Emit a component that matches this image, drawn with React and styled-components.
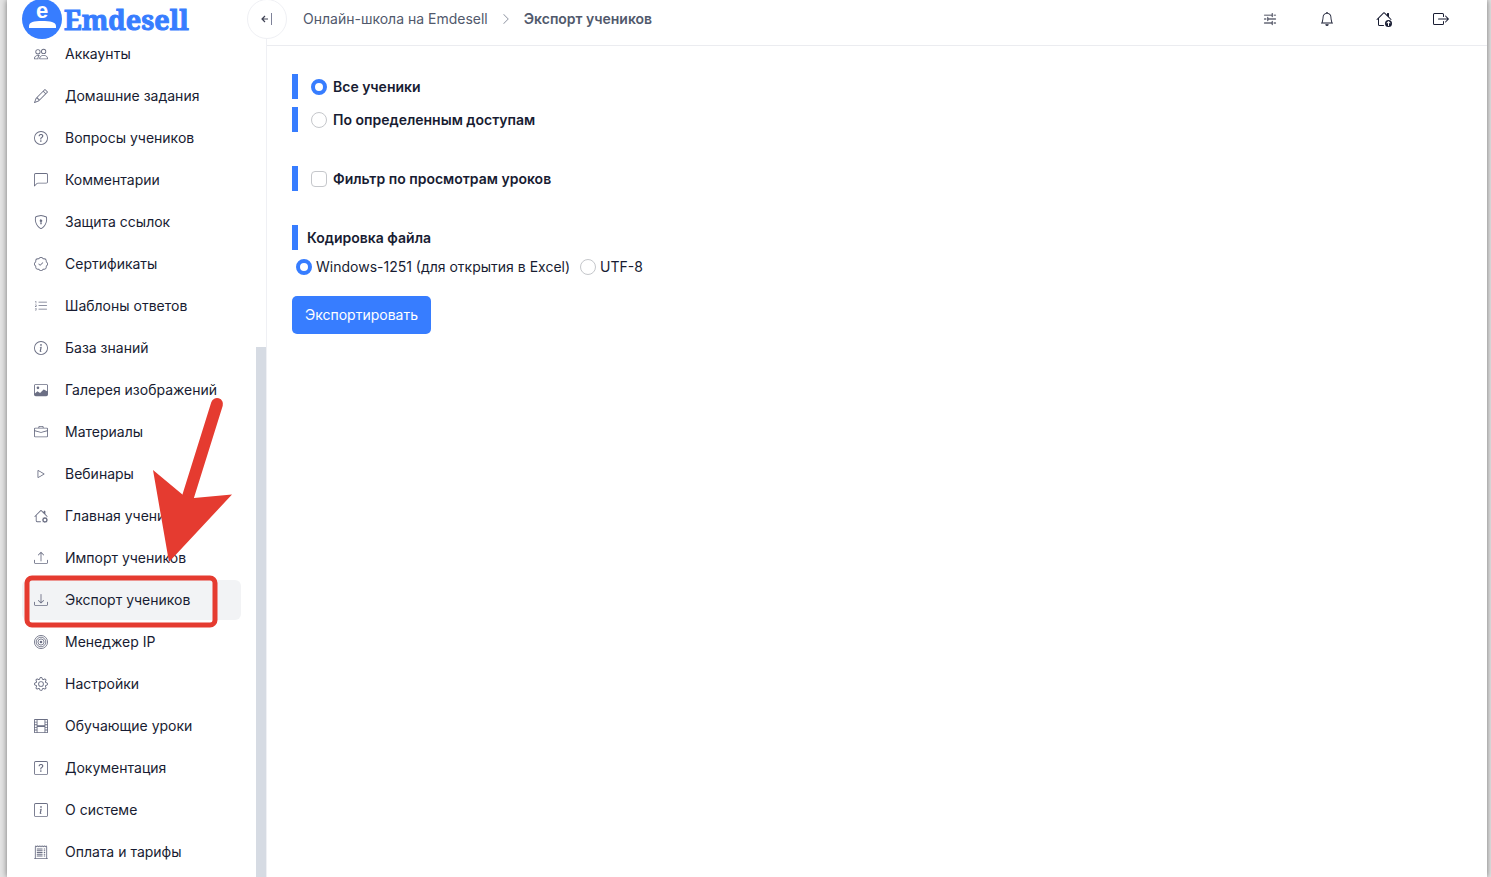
import styled, { createGlobalStyle, css } from "styled-components";
import { useState } from "react";
import {
    BsPeople, BsPencil, BsQuestionCircle, BsChatLeft, BsShieldLock, BsPatchCheck, BsListOl,
    BsInfoCircle, BsImage, BsBriefcase, BsPlay, BsHouseGear, BsUpload, BsDownload,
    BsGear, BsFilm, BsQuestionSquare, BsInfoSquare, BsReceiptCutoff, BsSliders2, BsBell, BsHouseUp,
    BsBoxArrowRight, BsChevronRight,
} from "react-icons/bs";

const GlobalStyle = createGlobalStyle`
    * {
        box-sizing: border-box;
    }

    body {
        margin: 0;
        background: #e4e4e4;
        color: #181c32;
        font-family: Inter, "Liberation Sans", sans-serif;
        font-size: 14px;
        line-height: 20px;
    }

    button, input {
        font: inherit;
    }
`;

const BullseyeIcon = () => (
    <svg width="14" height="14" viewBox="0 0 16 16" fill="none" stroke="currentColor" aria-hidden="true">
        <circle cx="8" cy="8" r="7.5" />
        <circle cx="8" cy="8" r="5.5" />
        <circle cx="8" cy="8" r="3.5" />
        <circle cx="8" cy="8" r="1.5" fill="currentColor" stroke="none" />
    </svg>
);

const menuItems = [
    { label: "Аккаунты", icon: BsPeople },
    { label: "Домашние задания", icon: BsPencil },
    { label: "Вопросы учеников", icon: BsQuestionCircle },
    { label: "Комментарии", icon: BsChatLeft },
    { label: "Защита ссылок", icon: BsShieldLock },
    { label: "Сертификаты", icon: BsPatchCheck },
    { label: "Шаблоны ответов", icon: BsListOl },
    { label: "База знаний", icon: BsInfoCircle },
    { label: "Галерея изображений", icon: BsImage },
    { label: "Материалы", icon: BsBriefcase },
    { label: "Вебинары", icon: BsPlay },
    { label: "Главная учеников", icon: BsHouseGear },
    { label: "Импорт учеников", icon: BsUpload },
    { label: "Экспорт учеников", icon: BsDownload, active: true },
    { label: "Менеджер IP", icon: BullseyeIcon },
    { label: "Настройки", icon: BsGear },
    { label: "Обучающие уроки", icon: BsFilm },
    { label: "Документация", icon: BsQuestionSquare },
    { label: "О системе", icon: BsInfoSquare },
    { label: "Оплата и тарифы", icon: BsReceiptCutoff },
];

const headerActions = [
    { label: "Параметры", icon: BsSliders2, size: 14 },
    { label: "Уведомления", icon: BsBell, size: 14 },
    { label: "Главная", icon: BsHouseUp, size: 16 },
    { label: "Выход", icon: BsBoxArrowRight, size: 16 },
];

const Page = styled.div`
    display: flex;
    height: 100vh;
    margin: 0 4px 0 7px;
    overflow: hidden;
    background: #fff;
    box-shadow: 0 0 6px rgba(0, 0, 0, 0.5);
`;

const Sidebar = styled.aside`
    position: relative;
    display: flex;
    flex-direction: column;
    flex: 0 0 260px;
    border-right: 1px solid #eff0f4;
`;

const Logo = styled.a`
    display: flex;
    align-items: center;
    flex: none;
    gap: 2px;
    height: 39px;
    padding-left: 15px;
    color: #377dff;
    font-family: "Noto Serif", "DejaVu Serif", serif;
    font-size: 27px;
    font-weight: 700;
    text-decoration: none;
    -webkit-text-stroke: 1px #377dff;
`;

const LogoMark = styled.span`
    position: relative;
    display: flex;
    flex: none;
`;

const LogoLetter = styled.span`
    position: absolute;
    top: 0;
    left: 0;
    width: 100%;
    color: #fff;
    font-family: "Liberation Sans", sans-serif;
    font-size: 22px;
    line-height: 22px;
    text-align: center;
    -webkit-text-stroke: 0;
`;

const CollapseButton = styled.button`
    position: absolute;
    top: -1px;
    right: -21px;
    z-index: 1;
    display: grid;
    place-items: center;
    width: 40px;
    height: 40px;
    padding: 0;
    border: 1px solid #eff0f4;
    border-radius: 50%;
    background: #fff;
    color: #3f4254;
`;

const MenuScroll = styled.div`
    position: relative;
    display: flex;
    flex: 1;
    min-height: 0;
`;

const Menu = styled.nav`
    flex: 1;
    display: flex;
    flex-direction: column;
    justify-content: flex-end;
    gap: 2px;
    padding: 0 15px 5px;
`;

const MenuItem = styled.a`
    display: flex;
    align-items: center;
    flex: none;
    gap: 17px;
    height: 40px;
    padding: 0 12px;
    border-radius: 6px;
    background: ${({ $active }) => ($active ? "#f2f3f5" : "transparent")};
    color: #181c32;
    text-decoration: none;
    white-space: nowrap;

    svg {
        flex: none;
        color: #6b6f84;
    }
`;

const ScrollTrack = styled.div`
    display: flex;
    flex: 0 0 10px;
    align-items: flex-end;
`;

const ScrollThumb = styled.div`
    width: 10px;
    height: calc(63% + 2px);
    background: #d6dbe3;
`;

const Main = styled.div`
    flex: 1;
    min-width: 0;
`;

const Header = styled.header`
    display: flex;
    justify-content: space-between;
    height: 46px;
    padding: 0 38px 7px 36px;
    border-bottom: 1px solid #ebecf0;
`;

const Breadcrumbs = styled.nav`
    display: flex;
    align-items: center;
    gap: 12px;
    color: #51596c;

    a {
        color: inherit;
        text-decoration: none;
    }

    svg {
        color: #8c92a0;
    }

    strong {
        font-weight: 600;
    }
`;

const Actions = styled.div`
    display: flex;
    align-items: center;
    gap: 41px;
`;

const ActionButton = styled.button`
    display: grid;
    place-items: center;
    width: 16px;
    height: 24px;
    padding: 0;
    border: 0;
    background: none;
    color: #181c32;
`;

const ExportForm = styled.form`
    display: flex;
    flex-direction: column;
    align-items: flex-start;
    padding: 28px 25px;
`;

const Group = styled.div`
    display: flex;
    flex-direction: column;
    gap: 8px;
    margin-bottom: 34px;
`;

const marked = css`
    display: flex;
    align-items: center;
    height: 25px;
    border-left: 6px solid #377dff;
    font-weight: 600;
`;

const MarkedLabel = styled.label`
    ${marked}
    gap: 6px;
    padding-left: 13px;
`;

const MarkedTitle = styled.h2`
    ${marked}
    margin: 0;
    padding-left: 9px;
    font-size: 14px;
`;

const Check = styled.input`
    appearance: none;
    flex: none;
    width: 16px;
    height: 16px;
    margin: 0;
    border: 1px solid #c5c7cb;
    border-radius: ${({ type }) => (type === "radio" ? "50%" : "4px")};
    background: #fff;

    &:checked {
        border: ${({ type }) => (type === "radio" ? "4px" : "8px")} solid #377dff;
    }
`;

const Encodings = styled.div`
    display: flex;
    gap: 10px;
    margin: 7px 0 19px 4px;
`;

const EncodingLabel = styled.label`
    display: flex;
    align-items: center;
    gap: 4px;
`;

const ExportButton = styled.button`
    height: 38px;
    padding: 0 13px;
    border: 0;
    border-radius: 5px;
    background: #377dff;
    color: #fff;
`;

const Annotation = styled.svg`
    position: absolute;
    top: 357px;
    left: 17px;
    pointer-events: none;
`;

const App = () => {
    const [scope, setScope] = useState("all");
    const [byViews, setByViews] = useState(false);
    const [encoding, setEncoding] = useState("windows-1251");

    return (
        <>
            <GlobalStyle />
            <Page>
                <Sidebar>
                    <Logo href="#">
                        <LogoMark>
                            <svg width="40" height="39" viewBox="0 0 40 39" aria-hidden="true">
                                <circle cx="20" cy="19" r="20" fill="#377dff" />
                                <path d="M7 28v-2c0-4 5-5 13-5s14 1 14 5v2z" fill="#fff" />
                            </svg>
                            <LogoLetter>e</LogoLetter>
                        </LogoMark>
                        Emdesell
                    </Logo>
                    <CollapseButton type="button" aria-label="Свернуть меню">
                        <svg width="12" height="14" viewBox="0 0 12 14" fill="none" stroke="currentColor" aria-hidden="true">
                            <path d="M7 7H1.500M4 4L1 7l3 3" strokeWidth="1.200" />
                            <path d="M10.500 1v12" stroke="#7e8299" />
                        </svg>
                    </CollapseButton>
                    <MenuScroll>
                        <Menu>
                            {menuItems.map(({ label, icon: Icon, active }) => (
                                <MenuItem key={label} href="#" $active={active}>
                                    <Icon size={14} />
                                    {label}
                                </MenuItem>
                            ))}
                        </Menu>
                        <ScrollTrack>
                            <ScrollThumb />
                        </ScrollTrack>
                        <Annotation width="212" height="236" viewBox="24 396 212 236" aria-hidden="true">
                            <rect x="27" y="578" width="188" height="47" rx="5" fill="none" stroke="#e53b30" strokeWidth="5" />
                            <path d="M217 404L187 500" stroke="#e53b30" strokeWidth="12" strokeLinecap="round" />
                            <path d="M153 470L183 495 194 498 232 494.500 169 562z" fill="#e53b30" />
                        </Annotation>
                    </MenuScroll>
                </Sidebar>
                <Main>
                    <Header>
                        <Breadcrumbs>
                            <a href="#">Онлайн-школа на Emdesell</a>
                            <BsChevronRight size={12} />
                            <strong>Экспорт учеников</strong>
                        </Breadcrumbs>
                        <Actions>
                            {headerActions.map(({ label, icon: Icon, size }) => (
                                <ActionButton key={label} type="button" aria-label={label}>
                                    <Icon size={size} />
                                </ActionButton>
                            ))}
                        </Actions>
                    </Header>
                    <ExportForm onSubmit={(event) => event.preventDefault()}>
                        <Group>
                            <MarkedLabel>
                                <Check type="radio" name="scope" checked={scope === "all"} onChange={() => setScope("all")} />
                                Все ученики
                            </MarkedLabel>
                            <MarkedLabel>
                                <Check type="radio" name="scope" checked={scope === "access"} onChange={() => setScope("access")} />
                                По определенным доступам
                            </MarkedLabel>
                        </Group>
                        <Group>
                            <MarkedLabel>
                                <Check type="checkbox" checked={byViews} onChange={() => setByViews(!byViews)} />
                                Фильтр по просмотрам уроков
                            </MarkedLabel>
                        </Group>
                        <MarkedTitle>Кодировка файла</MarkedTitle>
                        <Encodings>
                            <EncodingLabel>
                                <Check
                                    type="radio"
                                    name="encoding"
                                    checked={encoding === "windows-1251"}
                                    onChange={() => setEncoding("windows-1251")}
                                />
                                Windows-1251 (для открытия в Excel)
                            </EncodingLabel>
                            <EncodingLabel>
                                <Check
                                    type="radio"
                                    name="encoding"
                                    checked={encoding === "utf-8"}
                                    onChange={() => setEncoding("utf-8")}
                                />
                                UTF-8
                            </EncodingLabel>
                        </Encodings>
                        <ExportButton type="submit">Экспортировать</ExportButton>
                    </ExportForm>
                </Main>
            </Page>
        </>
    );
};

export default App;
